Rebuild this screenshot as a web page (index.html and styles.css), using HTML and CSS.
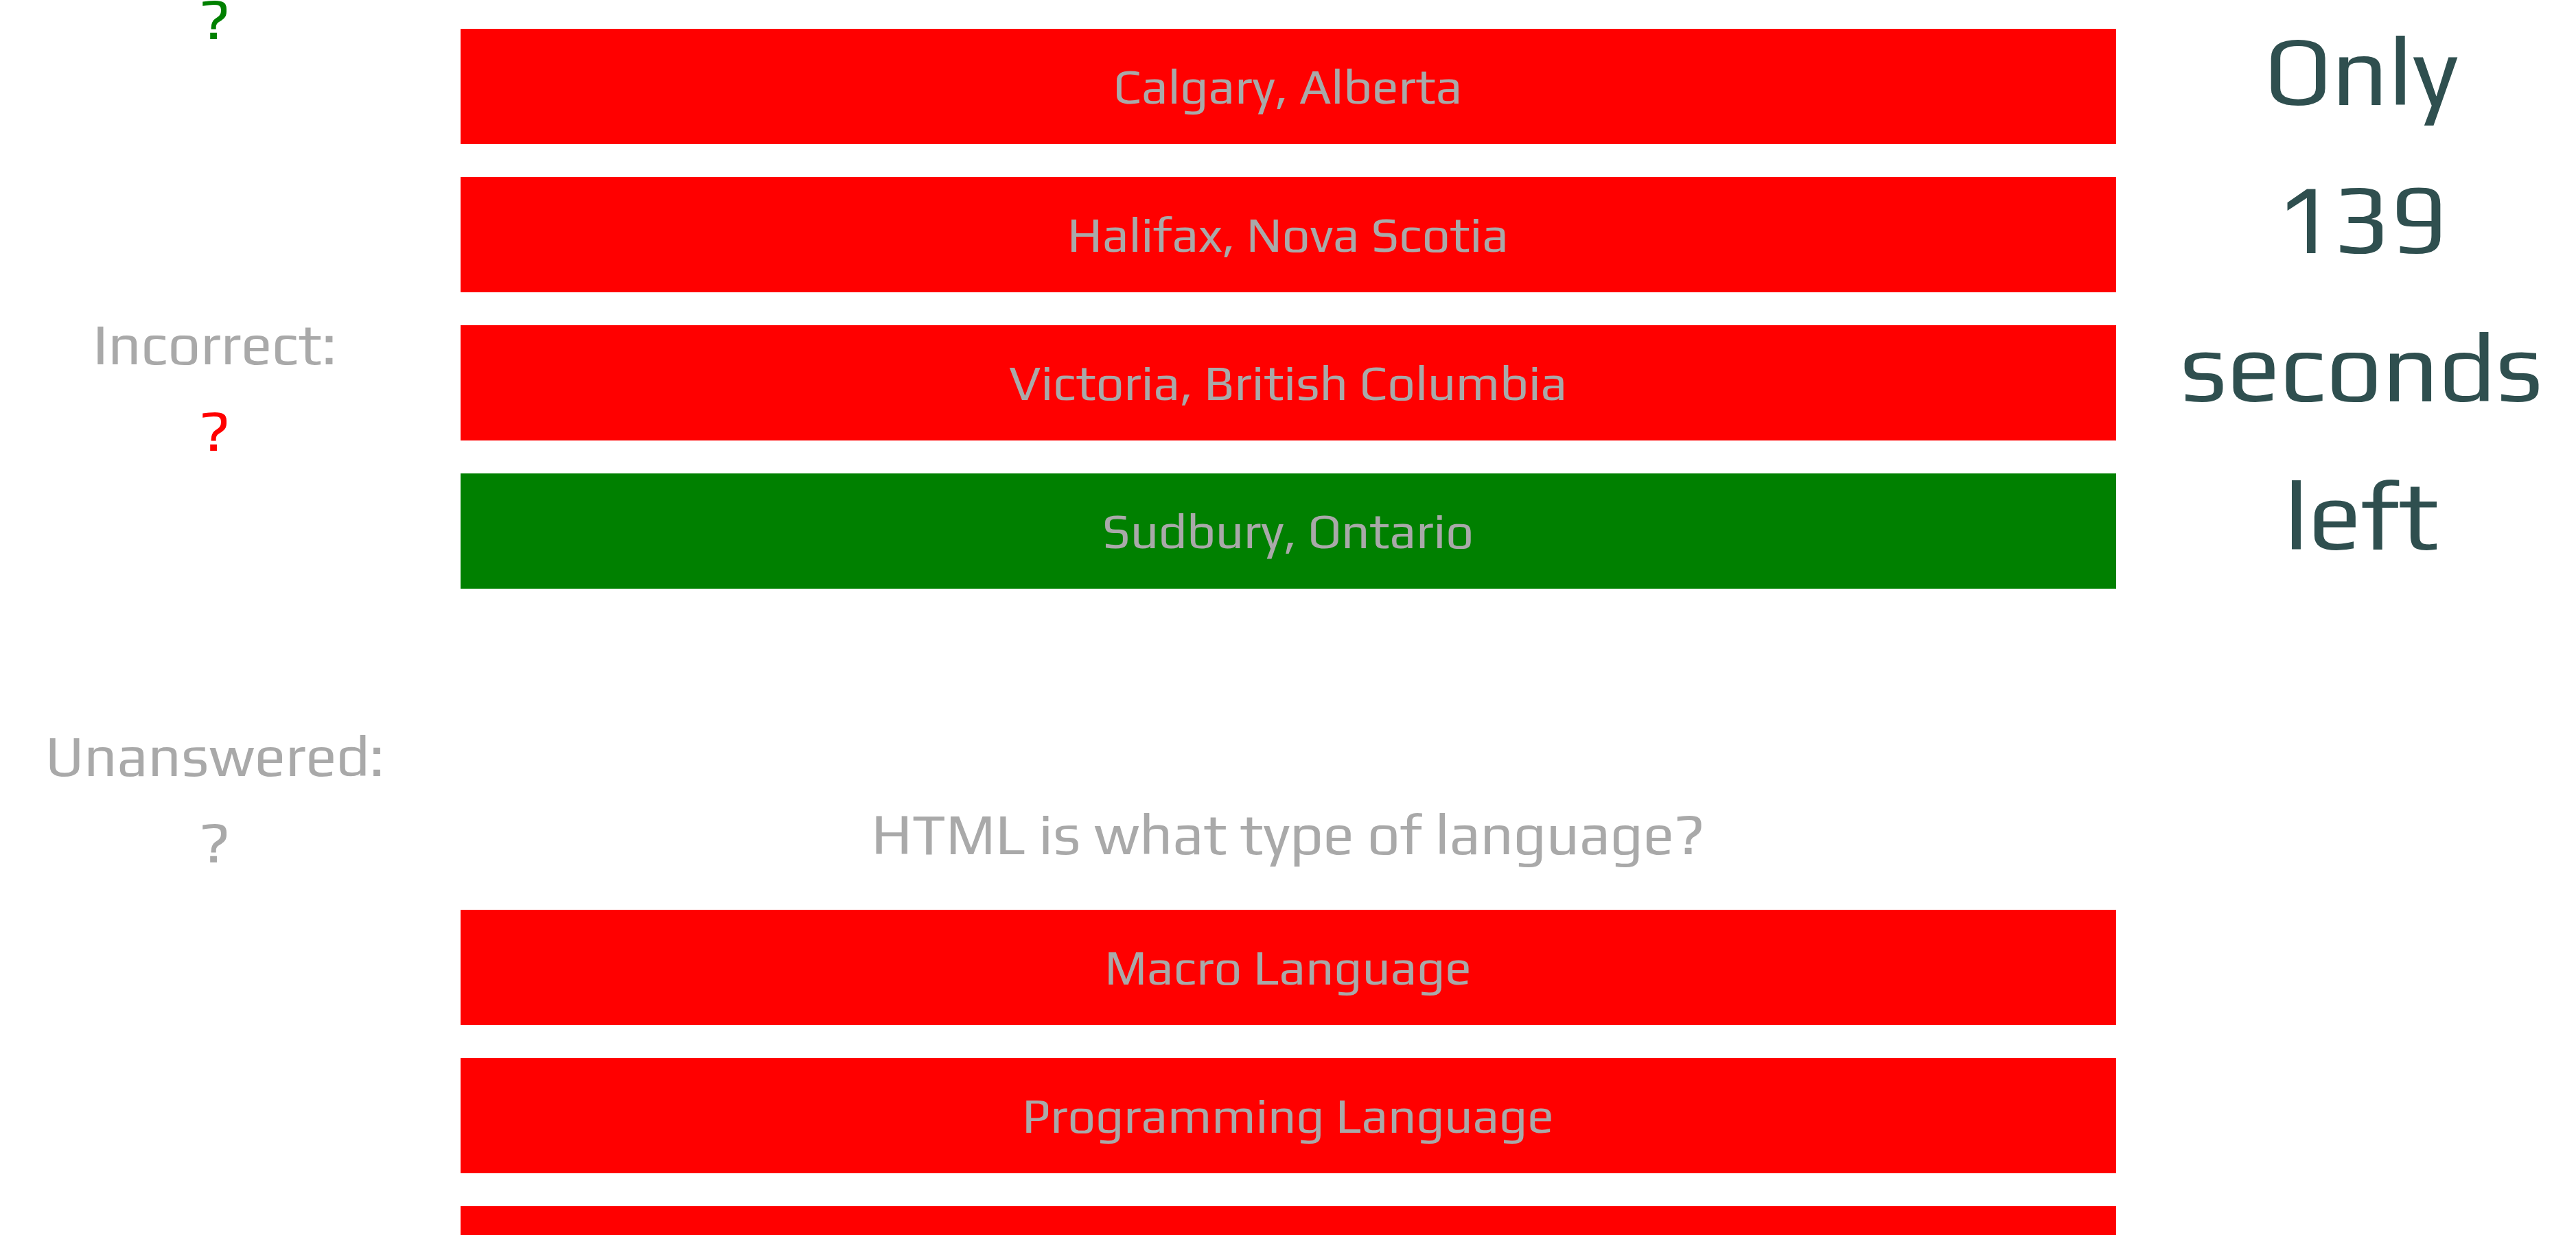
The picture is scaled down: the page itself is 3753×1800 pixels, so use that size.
FILE: index.html
```html
<!DOCTYPE html>
<html lang="en">
<head>
<meta charset="utf-8">
<title>Trivia</title>
<link rel="stylesheet" href="styles.css">
</head>
<body>
<main class="quiz">
  <aside class="scores">
    <p class="score score-correct">?</p>
    <div class="score">
      <p>Incorrect:</p>
      <p class="score-incorrect">?</p>
    </div>
    <div class="score">
      <p>Unanswered:</p>
      <p>?</p>
    </div>
  </aside>
  <div class="questions">
    <section class="answers">
      <button type="button" class="answer">Calgary, Alberta</button>
      <button type="button" class="answer">Halifax, Nova Scotia</button>
      <button type="button" class="answer">Victoria, British Columbia</button>
      <button type="button" class="answer answer-right">Sudbury, Ontario</button>
    </section>
    <section class="answers">
      <h2 class="question">HTML is what type of language?</h2>
      <button type="button" class="answer">Macro Language</button>
      <button type="button" class="answer">Programming Language</button>
      <button type="button" class="answer"></button>
    </section>
  </div>
  <aside class="timer">
    <p>Only</p>
    <p>139</p>
    <p>seconds</p>
    <p>left</p>
  </aside>
</main>
</body>
</html>
```
FILE: styles.css
```css
body {
  margin: 0;
  height: 100vh;
  overflow: hidden;
  background: white;
  color: darkgray;
  font-family: Play, "Noto Sans", sans-serif;
  text-align: center;
}

p,
h2 {
  margin: 0;
}

.quiz {
  display: grid;
  grid-template-columns: minmax(0, 1fr) minmax(0, 4fr) minmax(0, 1fr);
  margin-top: -36px;
}

.scores {
  display: flex;
  flex-direction: column;
  gap: 348px;
  font-size: 84px;
  line-height: 126px;
}

.score-correct {
  color: green;
}

.score-incorrect {
  color: red;
}

.questions {
  display: flex;
  flex-direction: column;
  gap: 294px;
  padding: 78px 45px 0;
}

.answers {
  display: flex;
  flex-direction: column;
  gap: 48px;
}

.question {
  font-size: 84px;
  font-weight: 400;
  line-height: 126px;
}

.answer {
  min-height: 168px;
  padding: 30px;
  border: 0;
  background: red;
  color: inherit;
  font-family: inherit;
  font-size: 72px;
  line-height: 108px;
}

.answer-right {
  background: green;
}

.timer {
  padding-top: 30px;
  color: darkslategray;
  font-size: 144px;
  line-height: 216px;
}
```
